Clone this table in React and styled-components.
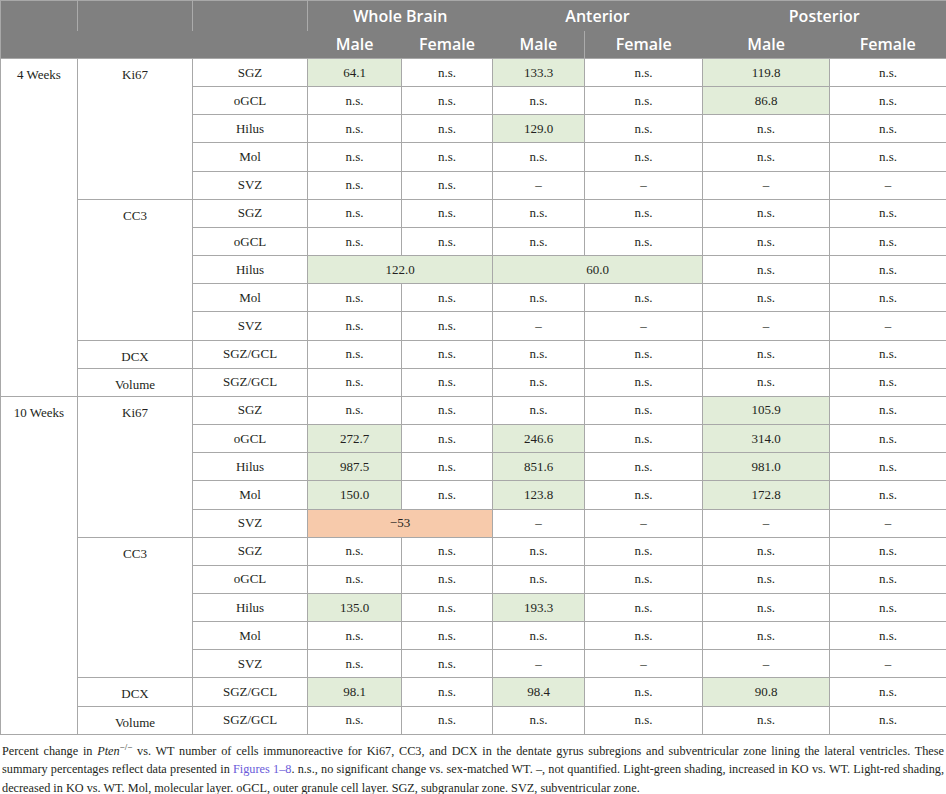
import React from "react";
import styled, { createGlobalStyle } from "styled-components";

const Global = createGlobalStyle`
  html, body { margin: 0; padding: 0; background: #ffffff; }
  body { font-family: "Liberation Serif", "Times New Roman", serif; }
`;

const Page = styled.div`
  width: 946px;
`;

const Table = styled.table`
  width: 946px;
  border-collapse: collapse;
  table-layout: fixed;
  border: 1px solid #a8a8a8;
  font-family: "Liberation Serif", "Times New Roman", serif;
  font-size: 13px;
  color: #231f20;
`;

const HeadRow = styled.tr`
  height: ${(p) => p.$h}px;
  background: #808080;
`;

const HeadCell = styled.th`
  padding: 0;
  font-family: "Open Sans", "Noto Sans", sans-serif;
  font-weight: 600;
  font-size: 16px;
  color: #ffffff;
  text-align: center;
  vertical-align: middle;
  border-right: ${(p) => (p.$divider ? "1px solid #ababab" : "none")};
  border-top: none;
  border-bottom: none;
`;

const BodyRow = styled.tr`
  height: 28.17px;
`;

const Cell = styled.td`
  padding: 0 4px;
  font-family: "Liberation Serif", "Times New Roman", serif;
  font-size: 13px;
  color: #231f20;
  text-align: center;
  vertical-align: ${(p) => (p.$top ? "top" : "middle")};
  padding-top: ${(p) => (p.$top ? "9px" : "0")};
  border: 1px solid #a8a8a8;
  background: ${(p) =>
    p.$shade === "g" ? "#e2edd9" : p.$shade === "r" ? "#f7caab" : "#ffffff"};
  border-left-color: ${(p) => (p.$joinLeft ? "#e2edd9" : "#a8a8a8")};
  line-height: 14px;
  white-space: nowrap;
`;

const Caption = styled.div`
  margin: 7px 2px 0 2px;
  font-family: "Liberation Serif", "Times New Roman", serif;
  font-size: 12.25px;
  line-height: 18.5px;
  color: #231f20;
`;

const CaptionLine = styled.span`
  display: block;
  white-space: nowrap;
  text-align: ${(p) => (p.$justify ? "justify" : "left")};
  text-align-last: ${(p) => (p.$justify ? "justify" : "left")};
`;

const Link = styled.span`
  color: #6a5ad9;
`;

const Sup = styled.sup`
  font-size: 9px;
  vertical-align: 5px;
  line-height: 0;
`;

const widths = [77, 115, 115, 94, 91, 92, 118, 127, 117];

const NS = "n.s.";
const D = "\u2013";

const g = (v) => ({ v, s: "g" });

const rows = [
  { age: "4 Weeks", ageSpan: 12, marker: "Ki67", mSpan: 5, region: "SGZ", vals: [g("64.1"), NS, g("133.3"), NS, g("119.8"), NS] },
  { region: "oGCL", vals: [NS, NS, NS, NS, g("86.8"), NS] },
  { region: "Hilus", vals: [NS, NS, g("129.0"), NS, NS, NS] },
  { region: "Mol", vals: [NS, NS, NS, NS, NS, NS] },
  { region: "SVZ", vals: [NS, NS, D, D, D, D] },
  { marker: "CC3", mSpan: 5, region: "SGZ", vals: [NS, NS, NS, NS, NS, NS] },
  { region: "oGCL", vals: [NS, NS, NS, NS, NS, NS] },
  { region: "Hilus", vals: [{ v: "122.0", s: "g", span: 2 }, { v: "60.0", s: "g", span: 2, join: true }, NS, NS] },
  { region: "Mol", vals: [NS, NS, NS, NS, NS, NS] },
  { region: "SVZ", vals: [NS, NS, D, D, D, D] },
  { marker: "DCX", mSpan: 1, region: "SGZ/GCL", vals: [NS, NS, NS, NS, NS, NS] },
  { marker: "Volume", mSpan: 1, region: "SGZ/GCL", vals: [NS, NS, NS, NS, NS, NS] },
  { age: "10 Weeks", ageSpan: 12, marker: "Ki67", mSpan: 5, region: "SGZ", vals: [NS, NS, NS, NS, g("105.9"), NS] },
  { region: "oGCL", vals: [g("272.7"), NS, g("246.6"), NS, g("314.0"), NS] },
  { region: "Hilus", vals: [g("987.5"), NS, g("851.6"), NS, g("981.0"), NS] },
  { region: "Mol", vals: [g("150.0"), NS, g("123.8"), NS, g("172.8"), NS] },
  { region: "SVZ", vals: [{ v: "\u221253", s: "r", span: 2 }, D, D, D, D] },
  { marker: "CC3", mSpan: 5, region: "SGZ", vals: [NS, NS, NS, NS, NS, NS] },
  { region: "oGCL", vals: [NS, NS, NS, NS, NS, NS] },
  { region: "Hilus", vals: [g("135.0"), NS, g("193.3"), NS, NS, NS] },
  { region: "Mol", vals: [NS, NS, NS, NS, NS, NS] },
  { region: "SVZ", vals: [NS, NS, D, D, D, D] },
  { marker: "DCX", mSpan: 1, region: "SGZ/GCL", vals: [g("98.1"), NS, g("98.4"), NS, g("90.8"), NS] },
  { marker: "Volume", mSpan: 1, region: "SGZ/GCL", vals: [NS, NS, NS, NS, NS, NS] },
];

export default function App() {
  return (
    <Page>
      <Global />
      <Table>
        <colgroup>
          {widths.map((w, i) => (
            <col key={i} style={{ width: w }} />
          ))}
        </colgroup>
        <thead>
          <HeadRow $h={30}>
            <HeadCell $divider />
            <HeadCell $divider />
            <HeadCell $divider />
            <HeadCell colSpan={2}>Whole Brain</HeadCell>
            <HeadCell colSpan={2}>Anterior</HeadCell>
            <HeadCell colSpan={2}>Posterior</HeadCell>
          </HeadRow>
          <HeadRow $h={28}>
            <HeadCell />
            <HeadCell />
            <HeadCell />
            <HeadCell>Male</HeadCell>
            <HeadCell>Female</HeadCell>
            <HeadCell $divider>Male</HeadCell>
            <HeadCell>Female</HeadCell>
            <HeadCell>Male</HeadCell>
            <HeadCell>Female</HeadCell>
          </HeadRow>
        </thead>
        <tbody>
          {rows.map((r, i) => (
            <BodyRow key={i}>
              {r.age && (
                <Cell rowSpan={r.ageSpan} $top>
                  {r.age}
                </Cell>
              )}
              {r.marker && (
                <Cell rowSpan={r.mSpan} $top>
                  {r.marker}
                </Cell>
              )}
              <Cell>{r.region}</Cell>
              {r.vals.map((v, j) =>
                typeof v === "string" ? (
                  <Cell key={j}>{v}</Cell>
                ) : (
                  <Cell key={j} colSpan={v.span || 1} $shade={v.s} $joinLeft={v.join}>
                    {v.v}
                  </Cell>
                )
              )}
            </BodyRow>
          ))}
        </tbody>
      </Table>
      <Caption>
        <CaptionLine $justify>
          Percent change in <i>Pten</i>
          <Sup>{"\u2212/\u2212"}</Sup> vs. WT number of cells immunoreactive for Ki67, CC3, and DCX in the dentate
          gyrus subregions and subventricular zone lining the lateral ventricles. These
        </CaptionLine>
        <CaptionLine $justify>
          summary percentages reflect data presented in <Link>Figures 1{"\u2013"}8</Link>. n.s., no significant change
          vs. sex-matched WT. {"\u2013"}, not quantified. Light-green shading, increased in KO vs. WT. Light-red shading,
        </CaptionLine>
        <CaptionLine>
          decreased in KO vs. WT. Mol, molecular layer. oGCL, outer granule cell layer. SGZ, subgranular zone. SVZ,
          subventricular zone.
        </CaptionLine>
      </Caption>
    </Page>
  );
}
